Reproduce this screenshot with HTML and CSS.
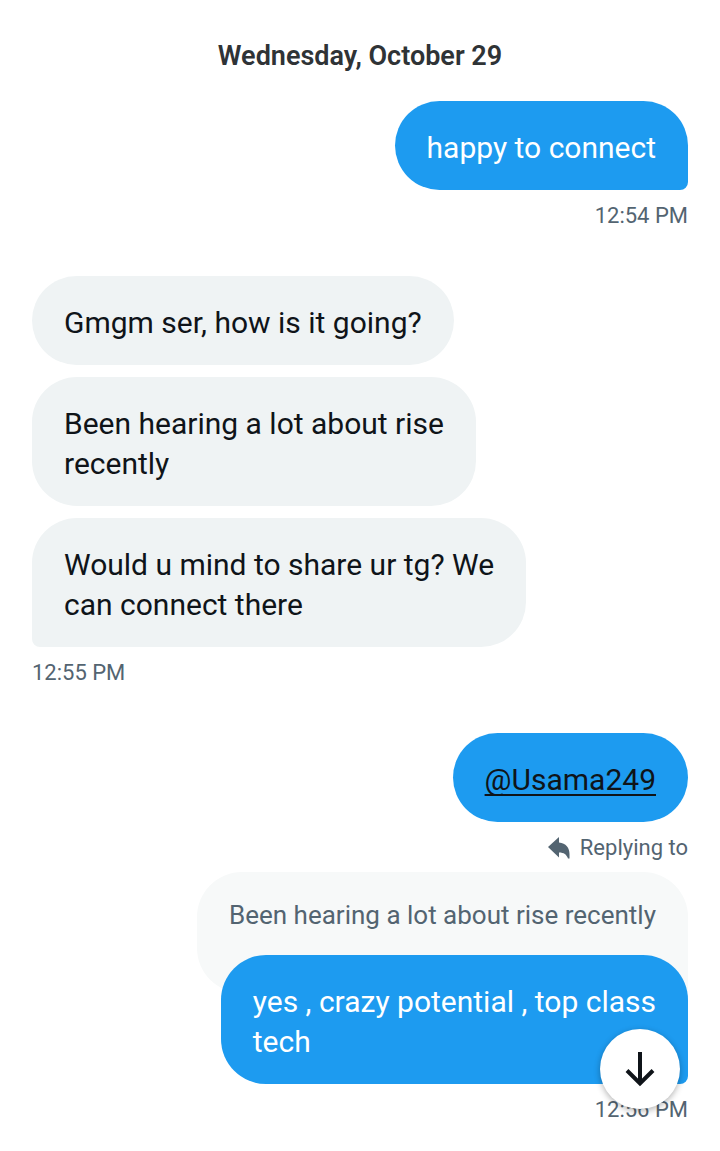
FILE: index.html
```
<!DOCTYPE html>
<html lang="en">
  <head>
    <meta charset="UTF-8" />
    <meta name="viewport" content="width=device-width, initial-scale=1" />
    <title>Messages</title>
    <link rel="stylesheet" href="styles.css">
  </head>

  <body>
    <main class="chat">
      <h1 class="date">Wednesday, October 29</h1>

      <section class="group sent">
        <p class="bubble last">happy to connect</p>
        <time class="meta">12:54 PM</time>
      </section>

      <section class="group received">
        <p class="bubble">Gmgm ser, how is it going?</p>
        <p class="bubble">Been hearing a lot about rise<br>recently</p>
        <p class="bubble last">Would u mind to share ur tg? We<br>can connect there</p>
        <time class="meta">12:55 PM</time>
      </section>

      <section class="group sent">
        <p class="bubble"><a class="mention" href="#">@Usama249</a></p>
        <div class="meta replying">
          <svg class="reply-icon" viewBox="0 0 22 22" aria-hidden="true">
            <path d="M0 10L11 0v5.500C18 6 21.500 11 21.500 17v4.500H20c-1.500-4-4-6-9-6v5z" />
          </svg>
          <span>Replying to</span>
        </div>
        <blockquote class="quote">Been hearing a lot about rise recently</blockquote>
        <p class="bubble last reply">yes , crazy potential , top class<br>tech</p>
        <time class="meta">12:56 PM</time>
      </section>
    </main>

    <button class="scroll-down" type="button" aria-label="Scroll to latest">
      <svg class="arrow" viewBox="0 0 30 36" aria-hidden="true">
        <path d="M15 1v32M2 19.500l13 13 13-13" />
      </svg>
    </button>
  </body>
</html>
```

FILE: styles.css
```
* {
  box-sizing: border-box;
}

body {
  margin: 0;
  background-color: #fff;
  color: #0f1419;
  font-family: Roboto, "Liberation Sans", sans-serif;
  font-size: 30px;
  line-height: 40px;
}

.chat {
  padding: 36px 32px 28px;
}

.date {
  margin: 0 0 25px;
  color: #2f3336;
  font-size: 27px;
  font-weight: 600;
  line-height: 40px;
  text-align: center;
}

.group {
  display: flex;
  flex-direction: column;
  gap: 12px;
  margin-bottom: 46px;
}

.received {
  align-items: flex-start;
}

.sent {
  align-items: flex-end;
}

.bubble {
  margin: 0;
  padding: 27px 32px 22px;
  border-radius: 45px;
  background-color: #eff3f4;
}

.sent .bubble {
  background-color: #1d9bf0;
  color: #fff;
}

.received .last {
  border-bottom-left-radius: 8px;
}

.sent .last {
  border-bottom-right-radius: 8px;
}

.sent .mention {
  color: #0f1419;
  text-decoration-thickness: 2px;
  text-decoration-skip-ink: none;
  text-underline-offset: 4px;
}

.meta {
  color: #536471;
  font-size: 22px;
  line-height: 28px;
}

.replying {
  display: flex;
  align-items: center;
  gap: 10px;
}

.reply-icon {
  width: 22px;
  height: 22px;
  fill: #536471;
}

.quote {
  margin: -2px 0 0;
  padding: 25px 32px 60px;
  border-radius: 45px 45px 0 45px;
  background-color: #f7f9f9;
  color: #536471;
  font-size: 26px;
  line-height: 36px;
}

/* the answer lies over the lower part of the quoted message */
.reply {
  margin-top: -50px;
}

.scroll-down {
  position: fixed;
  right: 40px;
  bottom: 42px;
  display: flex;
  align-items: center;
  justify-content: center;
  width: 80px;
  height: 80px;
  padding: 0;
  border: none;
  border-radius: 50%;
  background-color: #fff;
  box-shadow: 0 2px 6px rgba(0, 0, 0, 0.3);
}

.arrow {
  width: 30px;
  height: 36px;
  fill: none;
  stroke: #0f1419;
  stroke-width: 4;
}
```
